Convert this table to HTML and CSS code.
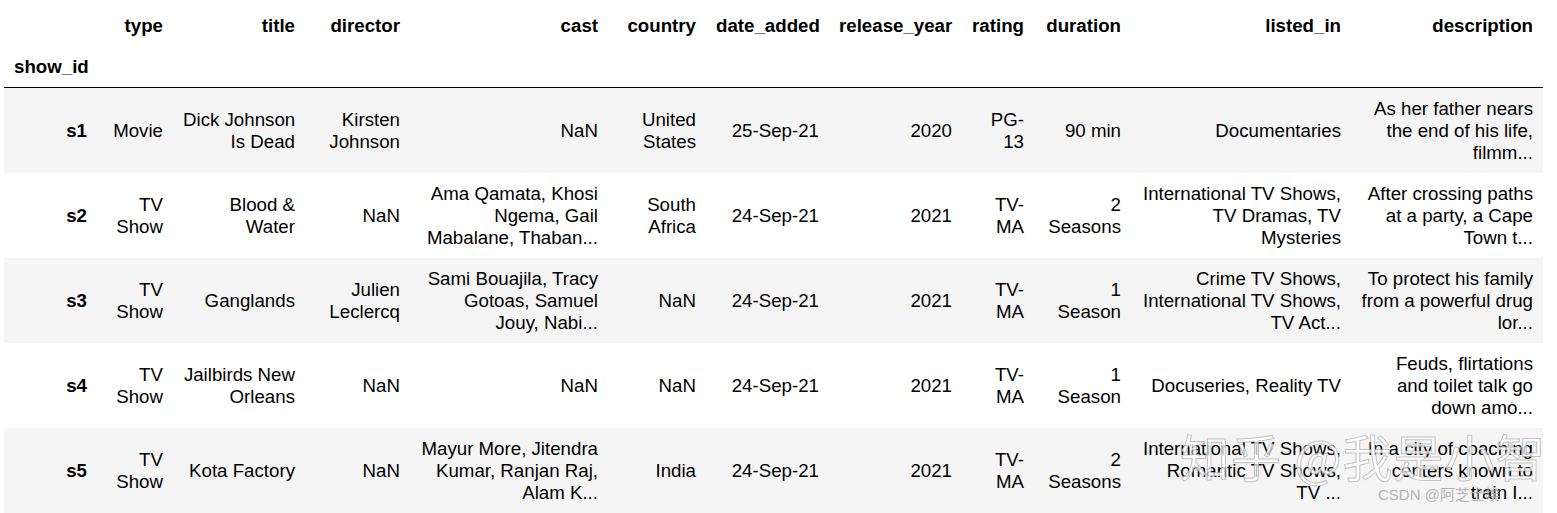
FILE: index.html
```html
<!DOCTYPE html>
<html>
<head>
<meta charset="utf-8">
<link rel="stylesheet" href="styles.css">
</head>
<body>
<div class="frame">
<table class="dataframe">
  <colgroup>
    <col class="c-idx"><col class="c-type"><col class="c-title"><col class="c-director"><col class="c-cast"><col class="c-country"><col class="c-date"><col class="c-year"><col class="c-rating"><col class="c-duration"><col class="c-listed"><col class="c-desc">
  </colgroup>
  <thead>
    <tr class="col-names">
      <th></th><th>type</th><th>title</th><th>director</th><th>cast</th><th>country</th><th>date_added</th><th>release_year</th><th>rating</th><th>duration</th><th>listed_in</th><th>description</th>
    </tr>
    <tr class="idx-name">
      <th>show_id</th><th></th><th></th><th></th><th></th><th></th><th></th><th></th><th></th><th></th><th></th><th></th>
    </tr>
  </thead>
  <tbody>
    <tr>
      <th>s1</th><td>Movie</td><td>Dick Johnson<br>Is Dead</td><td>Kirsten<br>Johnson</td><td>NaN</td><td>United<br>States</td><td>25-Sep-21</td><td>2020</td><td>PG-<br>13</td><td>90 min</td><td>Documentaries</td><td>As her father nears<br>the end of his life,<br>filmm...</td>
    </tr>
    <tr>
      <th>s2</th><td>TV<br>Show</td><td>Blood &amp;<br>Water</td><td>NaN</td><td>Ama Qamata, Khosi<br>Ngema, Gail<br>Mabalane, Thaban...</td><td>South<br>Africa</td><td>24-Sep-21</td><td>2021</td><td>TV-<br>MA</td><td>2<br>Seasons</td><td>International TV Shows,<br>TV Dramas, TV<br>Mysteries</td><td>After crossing paths<br>at a party, a Cape<br>Town t...</td>
    </tr>
    <tr>
      <th>s3</th><td>TV<br>Show</td><td>Ganglands</td><td>Julien<br>Leclercq</td><td>Sami Bouajila, Tracy<br>Gotoas, Samuel<br>Jouy, Nabi...</td><td>NaN</td><td>24-Sep-21</td><td>2021</td><td>TV-<br>MA</td><td>1<br>Season</td><td>Crime TV Shows,<br>International TV Shows,<br>TV Act...</td><td>To protect his family<br>from a powerful drug<br>lor...</td>
    </tr>
    <tr>
      <th>s4</th><td>TV<br>Show</td><td>Jailbirds New<br>Orleans</td><td>NaN</td><td>NaN</td><td>NaN</td><td>24-Sep-21</td><td>2021</td><td>TV-<br>MA</td><td>1<br>Season</td><td>Docuseries, Reality TV</td><td>Feuds, flirtations<br>and toilet talk go<br>down amo...</td>
    </tr>
    <tr>
      <th>s5</th><td>TV<br>Show</td><td>Kota Factory</td><td>NaN</td><td>Mayur More, Jitendra<br>Kumar, Ranjan Raj,<br>Alam K...</td><td>India</td><td>24-Sep-21</td><td>2021</td><td>TV-<br>MA</td><td>2<br>Seasons</td><td>International TV Shows,<br>Romantic TV Shows,<br>TV ...</td><td>In a city of coaching<br>centers known to<br>train I...</td>
    </tr>
  </tbody>
</table>
<div class="wm-big">知乎 @我是小智</div>
<div class="wm-small">CSDN @阿芝士埃</div>
</div>
</body>
</html>
```

FILE: styles.css
```css
html, body {
  margin: 0;
  padding: 0;
  background: #fff;
}
body {
  font-family: "Liberation Sans", Arial, "Noto Sans CJK SC", sans-serif;
  color: #000;
  overflow: hidden;
}
.frame {
  position: relative;
  padding: 5px 0 0 4px;
  width: 1553px;
  height: 508px;
}
.dataframe {
  border-collapse: collapse;
  border-spacing: 0;
  table-layout: fixed;
  width: 1539px;
  font-size: 18.7px;
  line-height: 22px;
}
.c-idx { width: 93px; }
.c-type { width: 76px; }
.c-title { width: 132px; }
.c-director { width: 105px; }
.c-cast { width: 198px; }
.c-country { width: 98px; }
.c-date { width: 123px; }
.c-year { width: 133px; }
.c-rating { width: 72px; }
.c-duration { width: 97px; }
.c-listed { width: 220px; }
.c-desc { width: 192px; }

.dataframe th,
.dataframe td {
  text-align: right;
  vertical-align: middle;
  padding: 9.5px 10px;
  white-space: nowrap;
}
.dataframe thead th {
  font-weight: bold;
}
.dataframe thead tr.idx-name th {
  border-bottom: 1px solid #000;
}
.dataframe tbody th {
  font-weight: bold;
}
.dataframe tbody tr:nth-child(odd) {
  background: #f5f5f5;
}
.wm-big {
  position: absolute;
  left: 1180px;
  top: 425px;
  font-family: "Noto Sans CJK SC", sans-serif;
  font-size: 50px;
  line-height: 60px;
  color: rgba(255, 255, 255, 0.75);
  -webkit-text-stroke: 1px rgba(150, 150, 150, 0.55);
  letter-spacing: 1px;
  white-space: nowrap;
  pointer-events: none;
}
.wm-small {
  position: absolute;
  left: 1378px;
  top: 486px;
  font-family: "Liberation Sans", "Noto Sans CJK SC", sans-serif;
  font-size: 15px;
  line-height: 18px;
  color: rgba(170, 170, 170, 0.9);
  white-space: nowrap;
  pointer-events: none;
}
```
